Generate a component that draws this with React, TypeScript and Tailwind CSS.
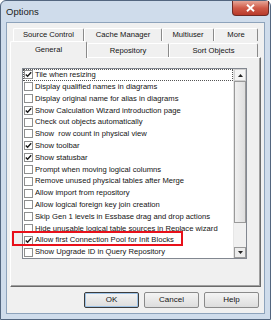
import { ReactNode } from 'react'

const options: [string, boolean][] = [
  ['Tile when resizing', true],
  ['Display qualified names in diagrams', false],
  ['Display original name for alias in diagrams', false],
  ['Show Calculation Wizard introduction page', true],
  ['Check out objects automatically', false],
  ['Show  row count in physical view', false],
  ['Show toolbar', true],
  ['Show statusbar', true],
  ['Prompt when moving logical columns', false],
  ['Remove unused physical tables after Merge', false],
  ['Allow import from repository', false],
  ['Allow logical foreign key join creation', false],
  ['Skip Gen 1 levels in Essbase drag and drop actions', false],
  ['Hide unusable logical table sources in Replace wizard', false],
  ['Allow first Connection Pool for Init Blocks', true],
  ['Show Upgrade ID in Query Repository', false],
]

function CheckBox({ checked }: { checked: boolean }) {
  return (
    <span className="flex h-[9px] w-[9px] shrink-0 items-center justify-center border border-[#8e8f8f] bg-white">
      {checked && (
        <svg width="7" height="7" viewBox="0 0 7 7">
          <path d="M0.8 3.4 L2.6 5.3 L6.2 1.2" fill="none" stroke="#1a1a1a" strokeWidth="1.4" />
        </svg>
      )}
    </span>
  )
}

function Tab({ label, w, h, selected }: { label: string; w: string; h: string; selected?: boolean }) {
  return (
    <div
      className={`flex items-center justify-center rounded-t-[2px] border-l border-t border-r border-l-white border-t-white border-r-[#8a8a8a] bg-[#f0f0f0] ${w} ${h} ${selected ? 'relative z-10 -mb-px' : ''}`}
    >
      {label}
    </div>
  )
}

function Button({ children, primary }: { children: ReactNode; primary?: boolean }) {
  return (
    <div
      className={`flex h-[16px] w-[55px] items-center justify-center rounded-[2px] border bg-gradient-to-b from-[#f4f4f4] to-[#dddddd] ${primary ? 'border-[#3c3c3c] shadow-[inset_0_0_0_1px_#9fc3e6]' : 'border-[#8a8a8a]'}`}
    >
      {children}
    </div>
  )
}

export default function App() {
  return (
    <div className="h-[320px] w-[271px] overflow-hidden bg-white">
      <div className="flex h-full flex-col rounded-t-[6px] border border-[#53667f] bg-[#cfdceb] font-['Liberation_Sans',Arial,sans-serif] text-[7.65px] text-[#141414]">
        <div className="flex h-[21px] shrink-0 items-start justify-between pl-[5px]">
          <span className="mt-[6px] text-[9.5px] leading-none text-[#1b1b1b]">Options</span>
          <div className="mr-[1px] flex h-[15px] w-[37px] items-center justify-center rounded-b-[4px] border border-t-0 border-[#6e2a24] bg-gradient-to-b from-[#e5a597] via-[#cf5a48] to-[#b83a2a]">
            <svg width="9" height="8" viewBox="0 0 9 8">
              <path d="M1 0.8 L8 7.2 M8 0.8 L1 7.2" stroke="white" strokeWidth="1.9" />
            </svg>
          </div>
        </div>

        <div className="mx-[5px] mb-[5px] flex flex-1 flex-col border border-[#8ea3bb] bg-[#f0f0f0]">
          <div className="ml-[6px] mt-[5px] flex h-[13px]">
            <Tab label="Source Control" w="w-[71px]" h="h-[13px]" />
            <Tab label="Cache Manager" w="w-[78px]" h="h-[13px]" />
            <Tab label="Multiuser" w="w-[52px]" h="h-[13px]" />
            <Tab label="More" w="w-[44px]" h="h-[13px]" />
          </div>
          <div className="ml-[3px] flex h-[16px] items-end">
            <Tab label="General" w="w-[77px]" h="h-[17px]" selected />
            <Tab label="Repository" w="w-[82px]" h="h-[14px]" />
            <Tab label="Sort Objects" w="w-[89px]" h="h-[14px]" />
          </div>

          <div className="ml-[3px] h-[230px] w-[251px] border border-l-white border-t-white border-r-[#6a6a6a] border-b-[#6a6a6a]">
            <div className="h-full w-full border-r border-b border-[#a0a0a0] pl-[11px] pt-[10px]">
              <div className="flex h-[191px] w-[225px] border border-[#828790] bg-white">
                <div className="flex flex-1 flex-col">
                  {options.map(([label, checked], i) => (
                    <div
                      key={label}
                      className={`relative flex h-[11.85px] items-center gap-[2px] pl-[1px] ${i === 0 ? 'outline outline-1 -outline-offset-1 outline-dotted outline-[#555]' : ''}`}
                    >
                      <CheckBox checked={checked} />
                      <span className="whitespace-pre leading-none">{label}</span>
                      {i === 14 && (
                        <div className="pointer-events-none absolute left-[-11px] top-[-3px] h-[15px] w-[171px] border-2 border-[#e8101a]" />
                      )}
                    </div>
                  ))}
                </div>
                <div className="flex w-[13px] flex-col border-l border-[#e6e6e6] bg-[#f0f0f0]">
                  <div className="flex h-[12px] items-center justify-center border border-[#d0d0d0] bg-[#f4f4f4]">
                    <svg width="5" height="3" viewBox="0 0 5 3">
                      <path d="M0 3 L2.5 0 L5 3 Z" fill="#222" />
                    </svg>
                  </div>
                  <div className="h-[142px] border border-[#9a9a9a] bg-gradient-to-r from-[#f0f0f0] to-[#dedede]" />
                  <div className="flex-1" />
                  <div className="flex h-[11px] items-center justify-center border border-[#9a9a9a] bg-[#ececec]">
                    <svg width="5" height="3" viewBox="0 0 5 3">
                      <path d="M0 0 L2.5 3 L5 0 Z" fill="#222" />
                    </svg>
                  </div>
                </div>
              </div>
            </div>
          </div>

          <div className="mt-[5px] flex justify-end gap-[5px] pr-[5px] text-[8px]">
            <Button primary>OK</Button>
            <Button>Cancel</Button>
            <Button>Help</Button>
          </div>
        </div>
      </div>
    </div>
  )
}
